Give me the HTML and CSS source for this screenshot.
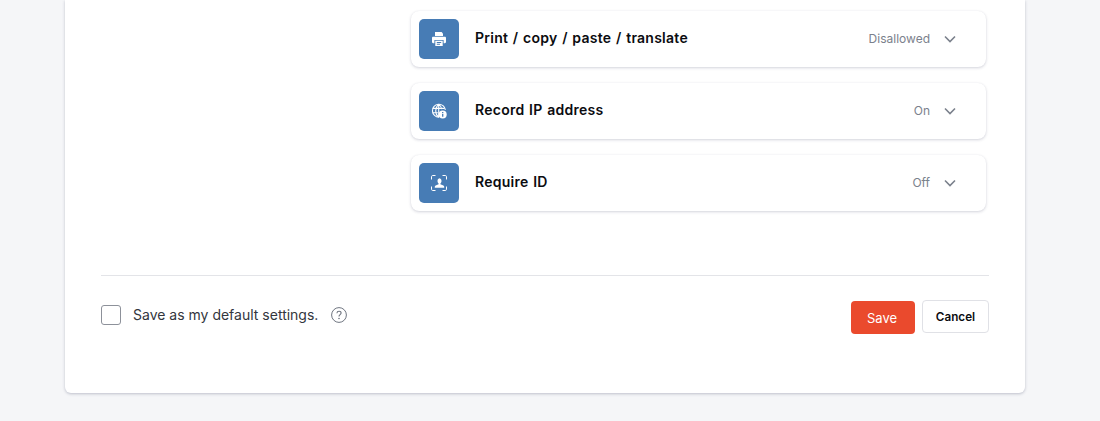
FILE: index.html
```html
<!DOCTYPE html>
<html lang="en">

<head>
    <meta charset="UTF-8">
    <title>Settings</title>
    <link rel="stylesheet" href="styles.css">
</head>

<body>
    <main class="card">
        <section class="settings">
            <article class="row">
                <div class="row-icon">
                    <svg viewBox="0 0 16 16" width="16" height="16" fill="#fff">
                        <path d="M4 1h6.600L12 2.400V5H4z"/>
                        <path d="M2.200 5.800h11.600c.7 0 1.200.5 1.200 1.200v4c0 .7-.5 1.200-1.200 1.200H12.600V9H3.400v3.200H2.200C1.500 12.200 1 11.700 1 11V7c0-.7.5-1.200 1.200-1.200z"/>
                        <path fill-rule="evenodd" d="M4.300 9.800h7.400V15H4.300zM5.800 11v.9h4.400V11zM5.800 12.800v.9h3.200v-.9z"/>
                    </svg>
                </div>
                <h2 class="row-title">Print / copy / paste / translate</h2>
                <span class="row-value">Disallowed</span>
                <svg class="chevron" viewBox="0 0 12 8" width="12" height="8"><path d="M1 1.500l5 5 5-5"/></svg>
            </article>
            <article class="row">
                <div class="row-icon">
                    <svg viewBox="0 0 16 16" width="16" height="16" fill="none" stroke="#fff" stroke-width="1.100">
                        <path d="M8 14.200A6.500 6.500 0 1 1 14.400 6.800"/>
                        <path d="M7.500 1.300C5.200 3.400 4.700 5.500 4.700 7.700s.7 4.600 2.800 6.500M7.900 1.300c1.700 1.400 2.600 3 2.900 4.900M1.600 5.400h12M1.500 9.700h5.300M7.700 1.300v12.900"/>
                        <circle cx="11.700" cy="11.400" r="4" fill="#fff" stroke="none"/>
                        <path d="M11.700 10.800v3M11.700 8.900v1" stroke="#477cb5" stroke-width="1.300"/>
                    </svg>
                </div>
                <h2 class="row-title">Record IP address</h2>
                <span class="row-value">On</span>
                <svg class="chevron" viewBox="0 0 12 8" width="12" height="8"><path d="M1 1.500l5 5 5-5"/></svg>
            </article>
            <article class="row">
                <div class="row-icon">
                    <svg viewBox="0 0 16 16" width="16" height="16" fill="#fff">
                        <path d="M.5 4.500V1.700C.5 1 1 .5 1.700 .5h2.800M11.500.5h2.800c.7 0 1.200.5 1.200 1.200v2.800M15.500 11.500v2.800c0 .7-.5 1.200-1.200 1.200h-2.800M4.500 15.500H1.700c-.7 0-1.200-.5-1.200-1.200v-2.800" fill="none" stroke="#fff"/>
                        <path d="M8 3.200c1.500 0 2.500 1.100 2.500 2.700 0 1.100-.5 2-1.100 2.500v.9l2.900 1.200c.6.300.9.700.9 1.300v.9H3.800v-.9c0-.6.3-1 .9-1.300l2.900-1.200v-.9c-.6-.5-1.100-1.400-1.100-2.500 0-1.600 1-2.700 2.500-2.700z"/>
                    </svg>
                </div>
                <h2 class="row-title">Require ID</h2>
                <span class="row-value">Off</span>
                <svg class="chevron" viewBox="0 0 12 8" width="12" height="8"><path d="M1 1.500l5 5 5-5"/></svg>
            </article>
        </section>

        <footer class="actions">
            <label class="default-setting">
                <span class="checkbox"></span>
                <span class="default-label">Save as my default settings.</span>
                <svg class="help" viewBox="0 0 16 16" width="16" height="16">
                    <circle cx="8" cy="8" r="7.400" fill="none" stroke="#6f7580"/>
                    <path d="M5.900 6.200C6 5 6.900 4.300 8 4.300c1.200 0 2.100.8 2.100 1.800 0 1.500-2.100 1.600-2.100 3.300" fill="none" stroke="#6f7580" stroke-width="1.100"/>
                    <circle cx="8" cy="11.500" r=".8" fill="#6f7580"/>
                </svg>
            </label>
            <div class="buttons">
                <button class="btn-save">Save</button>
                <button class="btn-cancel">Cancel</button>
            </div>
        </footer>
    </main>
</body></html>
```

FILE: styles.css
```css
html, body {
    height: 421px;
    overflow: hidden;
}

body {
    margin: 0;
    background-color: #f5f6f8;
    font-family: Inter, sans-serif;
}

.card {
    width: 888px;
    height: 382px;
    margin: 0 auto 0 65px;
    padding: 11px 36px 0;
    background-color: #fff;
    border-radius: 0 0 6px 6px;
    box-shadow: 0 1px 3px rgba(60, 66, 100, 0.3);
}

.settings {
    width: 575px;
    margin-left: 310px;
    display: grid;
    grid-gap: 16px;
}

.row {
    height: 56px;
    padding: 0 30px 0 8px;
    display: flex;
    align-items: center;
    border-radius: 8px;
    box-shadow: 0 1px 3px rgba(60, 66, 100, 0.22), 0 0 1px rgba(60, 66, 100, 0.08);
}

.row-icon {
    width: 40px;
    height: 40px;
    display: flex;
    align-items: center;
    justify-content: center;
    background-color: #477cb5;
    border-radius: 5px;
}

.row-title {
    flex: 1;
    margin: 0 0 2px 16px;
    font-family: Inter, sans-serif;
    font-size: 14px;
    font-weight: 600;
    letter-spacing: 0.25px;
    word-spacing: 0.9px;
    color: #0b0c10;
    line-height: 20px;
}

.row-value {
    font-size: 12px;
    color: #7b818c;
    margin-right: 14px;
    margin-bottom: 1px;
}

.chevron {
    fill: none;
    stroke: #7b818c;
    stroke-width: 1.600;
}

.actions {
    margin-top: 64px;
    padding-top: 24px;
    border-top: 1px solid #e3e4e8;
    display: flex;
    justify-content: space-between;
    align-items: flex-start;
}

.default-setting {
    margin-top: 5px;
    display: flex;
    align-items: center;
    font-size: 14px;
    color: #33363d;
}

.default-label {
    margin-bottom: 2px;
}

.checkbox {
    width: 18px;
    height: 18px;
    margin-right: 12px;
    border: 1px solid #8d919a;
    border-radius: 3px;
}

.help {
    margin-left: 13px;
}

.buttons {
    display: flex;
    gap: 7px;
}

.btn-save, .btn-cancel {
    height: 33px;
    border-radius: 4px;
    font-family: Inter, sans-serif;
}

.btn-save {
    width: 64px;
    margin-top: 1px;
    padding: 0 2px 0 0;
    background-color: #ea4a2d;
    border: none;
    color: #fff;
    font-size: 13px;
}

.btn-cancel {
    width: 67px;
    padding: 0;
    background-color: #fff;
    border: 1px solid #e0e1e6;
    color: #0b0c10;
    font-size: 11.700px;
    font-weight: 600;
}
```
